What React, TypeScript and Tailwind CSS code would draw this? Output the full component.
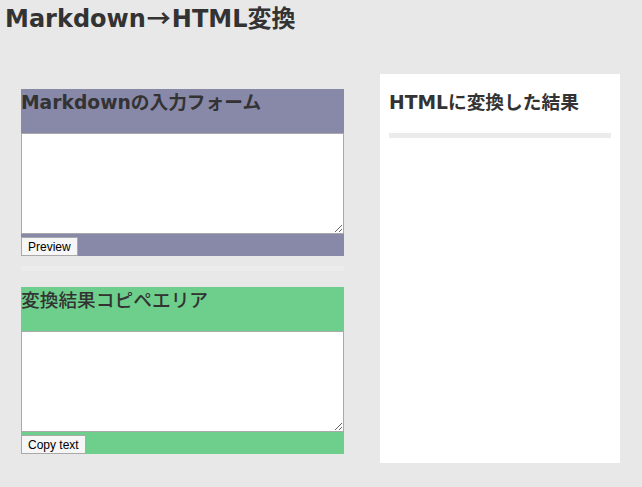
import React from "react";

export default function App() {
  return (
    <div className="min-h-[487px] bg-[#e8e8e8] text-[#333] font-['DejaVu_Sans','Noto_Sans_CJK_JP',sans-serif]">
      <h2 className="h-[33px] px-[5px] pt-[5px] text-[24px] font-bold leading-[28px]">
        Markdown<span className="px-[1px] font-['Noto_Sans_CJK_JP',sans-serif] leading-none">→</span>HTML変換
      </h2>
      <div className="mt-[41px] flex items-start">
        <div className="ml-[21px] mt-[15px] w-[323px]">
          <div className="bg-[#8888a8]">
            <h3 className="h-[44px] pt-[2px] text-[18.72px] font-bold leading-[23px]">Markdownの入力フォーム</h3>
            <textarea className="block h-[101px] w-full resize border border-[#a9a9a9] bg-white outline-none" />
            <div className="mt-[3px] flex">
              <button className="flex h-[19px] items-center border border-[#a9a9a9] bg-[#f6f6f6] px-[6px] font-['Liberation_Sans',Arial,sans-serif] text-[12px] text-black">
                Preview
              </button>
            </div>
          </div>
          <div className="mt-[10px] mb-[16px] h-[5px] bg-[#ececec]" />
          <div className="bg-[#6ecf8c]">
            <div className="h-[44px] pt-[2px] text-[18.72px] font-medium leading-[23px]">変換結果コピペエリア</div>
            <textarea className="block h-[101px] w-full resize border border-[#a9a9a9] bg-white outline-none" />
            <div className="mt-[3px] flex">
              <button className="flex h-[19px] items-center border border-[#a9a9a9] bg-[#f6f6f6] px-[6px] font-['Liberation_Sans',Arial,sans-serif] text-[12px] text-black">
                Copy text
              </button>
            </div>
          </div>
        </div>
        <div className="ml-[36px] h-[389px] w-[240px] bg-white px-[9px] pt-[17px]">
          <h3 className="text-[18.72px] font-bold leading-[23px]">HTMLに変換した結果</h3>
          <div className="mt-[19px] h-[5px] bg-[#ebebeb]" />
        </div>
      </div>
    </div>
  );
}
